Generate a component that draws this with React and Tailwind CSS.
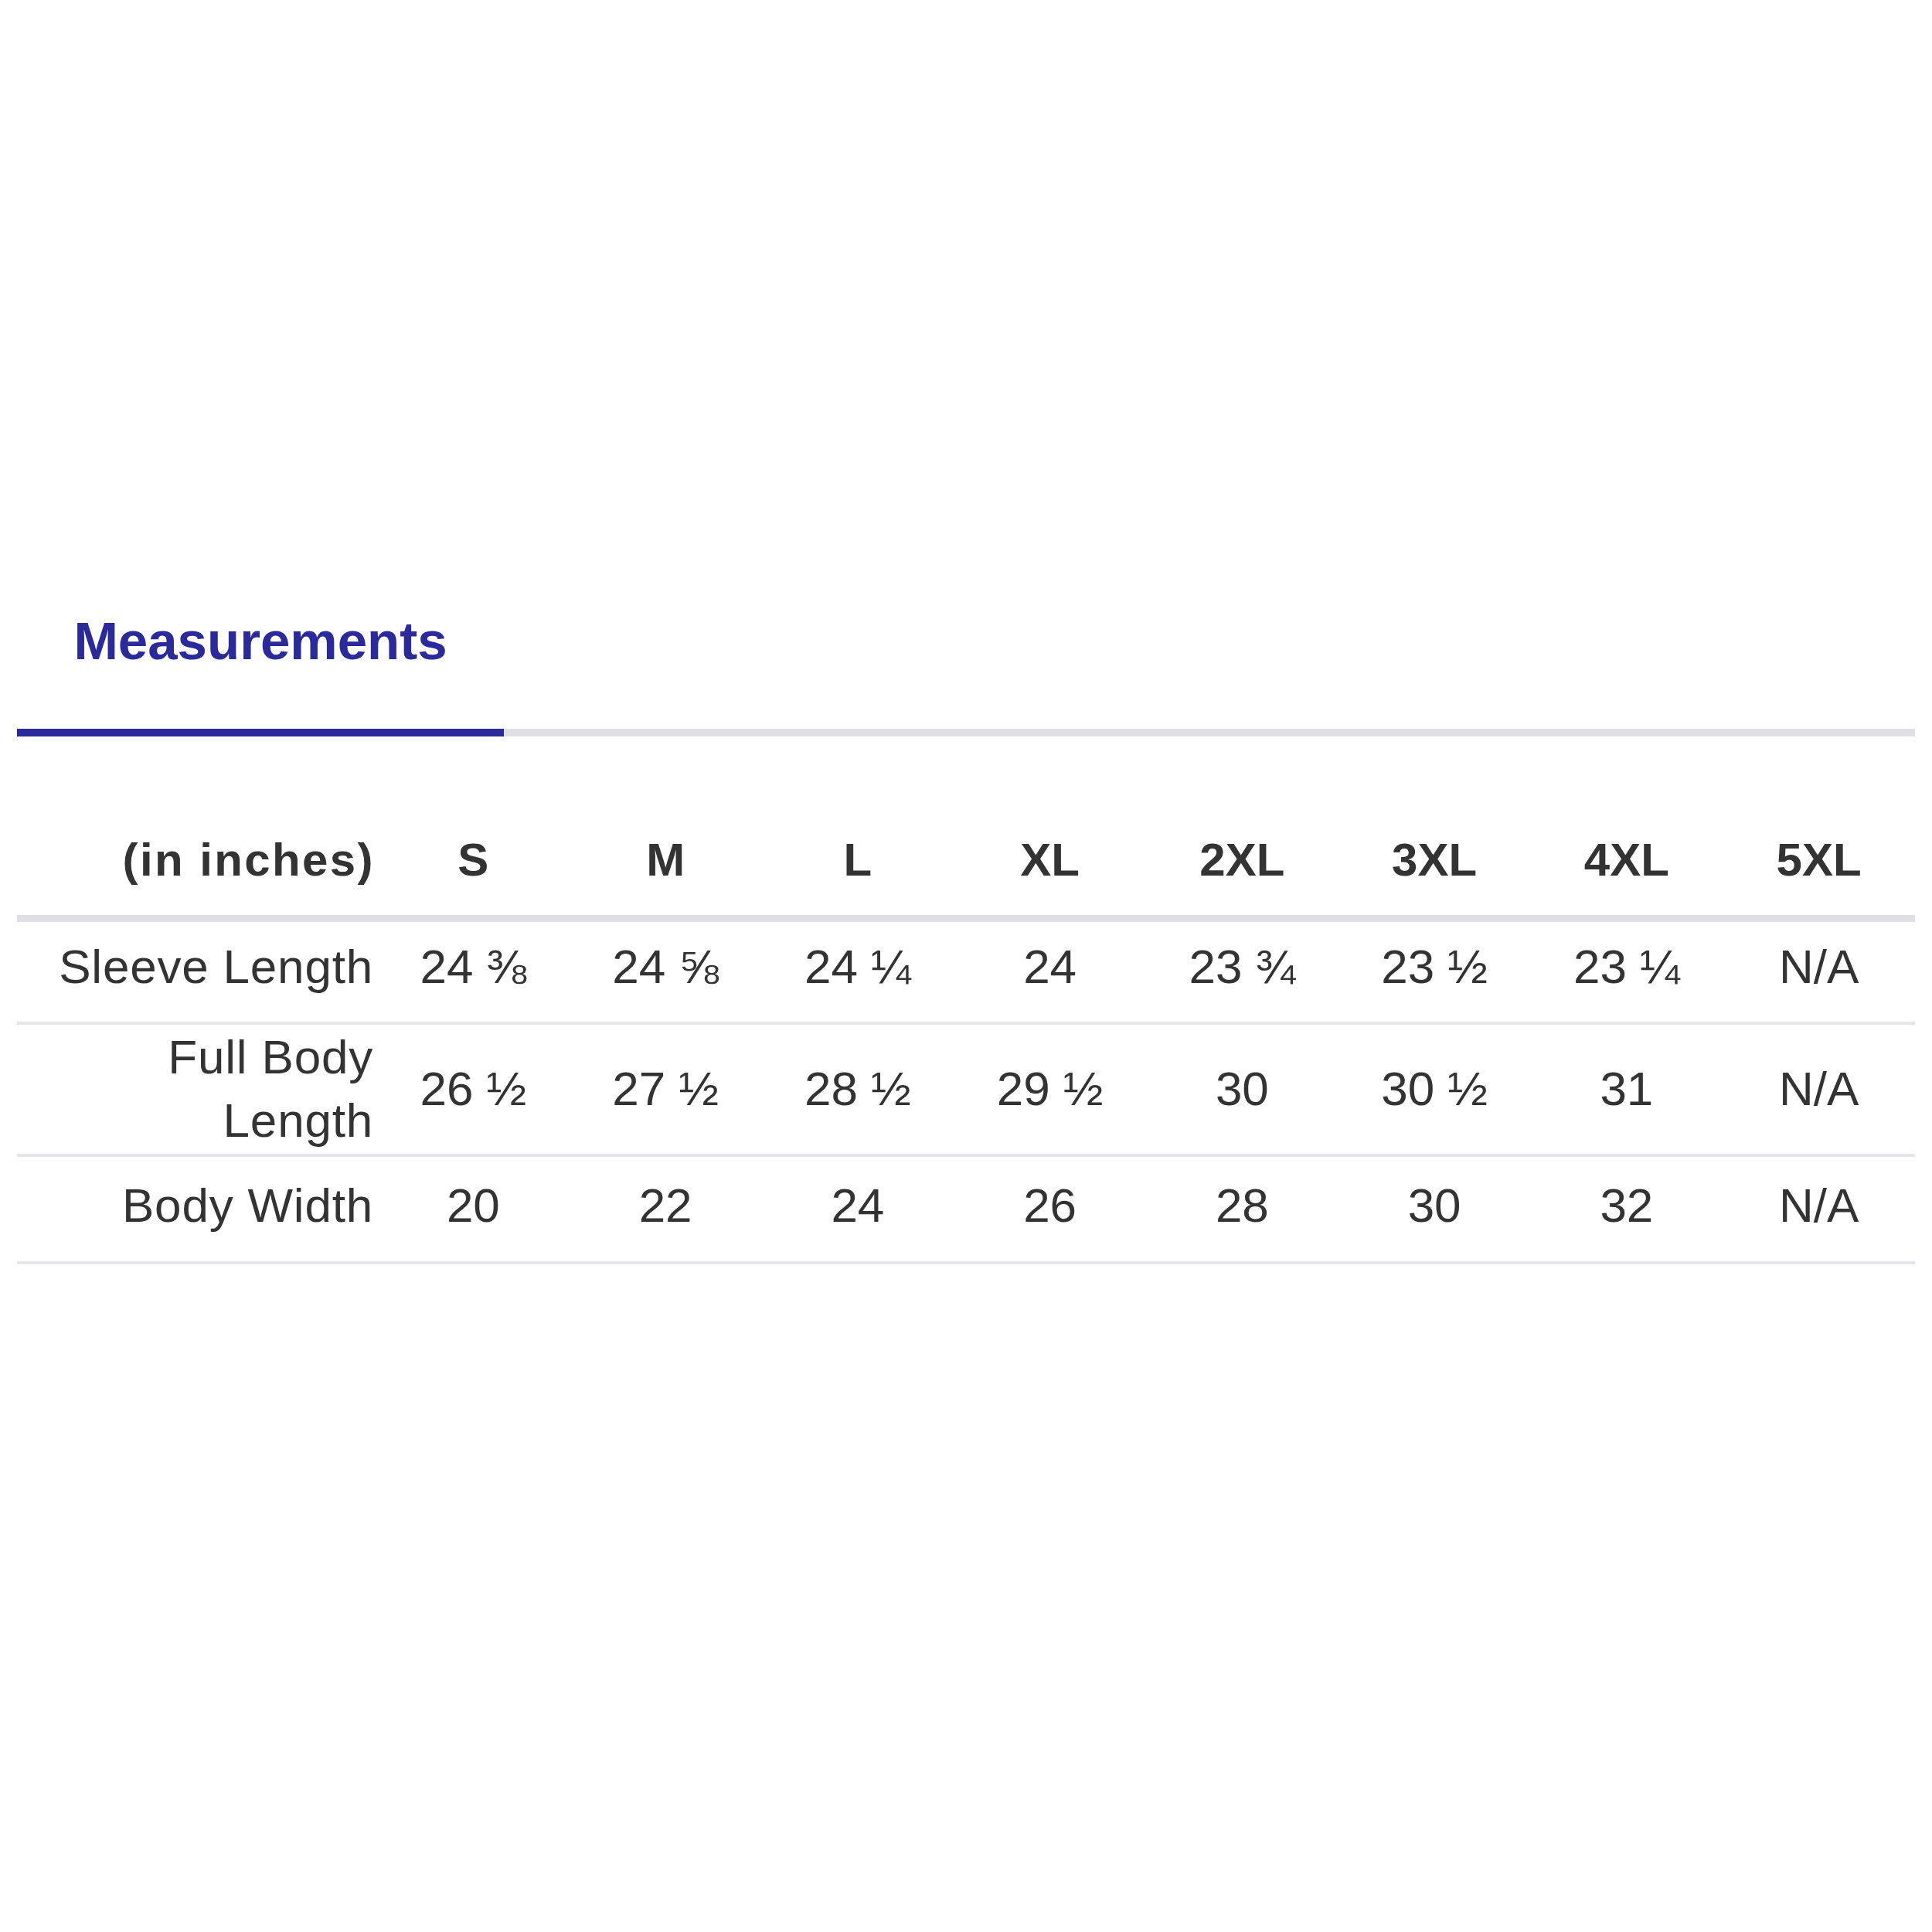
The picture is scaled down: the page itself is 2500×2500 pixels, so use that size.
const sizes = ['S', 'M', 'L', 'XL', '2XL', '3XL', '4XL', '5XL']

const rows = [
  {
    label: 'Sleeve Length',
    values: ['24 ⅜', '24 ⅝', '24 ¼', '24', '23 ¾', '23 ½', '23 ¼', 'N/A'],
    cls: 'h-[133px] pb-[14px]',
  },
  {
    label: (
      <>
        Full Body
        <br />
        Length
      </>
    ),
    values: ['26 ½', '27 ½', '28 ½', '29 ½', '30', '30 ½', '31', 'N/A'],
    cls: 'h-[171px] pb-[2px]',
  },
  {
    label: 'Body Width',
    values: ['20', '22', '24', '26', '28', '30', '32', 'N/A'],
    cls: 'h-[139px] pb-[10px]',
  },
]

export default function App() {
  return (
    <div className="w-[2500px] min-h-[2500px] bg-white px-[22px] pt-[780px] font-['Liberation_Sans',Arial,sans-serif] text-[#333333]">
      {/* Tabs */}
      <div className="flex border-b-[10px] border-[#e0e0e4]">
        <div className="-mb-[10px] w-[630px] border-b-[10px] border-[#2b2a9b] pb-[63px] text-center text-[69px] font-bold leading-[100px] text-[#2b2a9b]">
          Measurements
        </div>
      </div>

      {/* Size chart */}
      <div className="mt-[88px]">
        <div className="grid h-[152px] grid-cols-[466px_repeat(8,minmax(0,1fr))] items-center border-b-[9px] border-[#e0e0e4] text-[60px] font-bold leading-[82px]">
          <div className="pr-[3px] text-right tracking-[2.4px]">(in inches)</div>
          {sizes.map((s) => (
            <div key={s} className="text-center">
              {s}
            </div>
          ))}
        </div>

        {rows.map((row, i) => (
          <div
            key={i}
            className={`grid grid-cols-[466px_repeat(8,minmax(0,1fr))] items-center border-b-4 border-[#e6e6e9] text-[62px] leading-[82px] ${row.cls}`}
          >
            <div className="pr-[5px] text-right tracking-[0.8px]">{row.label}</div>
            {row.values.map((v, j) => (
              <div key={j} className="text-center">
                {v}
              </div>
            ))}
          </div>
        ))}
      </div>
    </div>
  )
}
